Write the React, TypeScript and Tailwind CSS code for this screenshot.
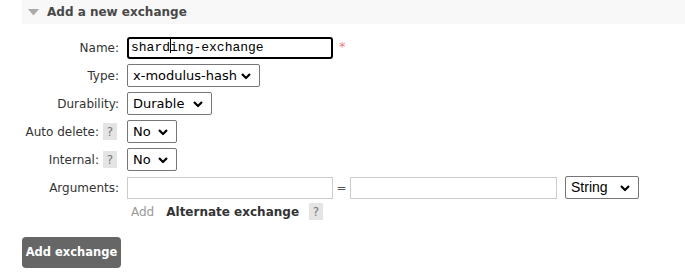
import React from 'react';

const Chevron: React.FC = () => (
    <svg width="10" height="7" viewBox="0 0 10 7" className="absolute right-[8px] top-1/2 -translate-y-1/2 pointer-events-none">
        <path d="M1 1.5 L5 5.5 L9 1.5" fill="none" stroke="#000" strokeWidth="2.2" />
    </svg>
);

const Select: React.FC<{ value: string; width: string; arial?: boolean }> = ({ value, width, arial }) => (
    <div className={`relative h-[23px] ${width} border border-[#767676] rounded-[2px] bg-white flex items-center pl-[5px] text-[13px] text-black ${arial ? "font-['Liberation_Sans',sans-serif] text-[14px]" : ''}`}>
        {value}
        <Chevron />
    </div>
);

const Help: React.FC = () => (
    <span className="inline-flex items-center justify-center w-[14px] h-[17px] bg-[#e4e4e4] text-[#777] text-[12px] ml-[4px]">?</span>
);

const App: React.FC = () => {
    return (
        <div className="w-[685px] h-[277px] bg-white font-['DejaVu_Sans',Verdana,sans-serif] text-[12px] text-[#333] overflow-hidden">
            {/* Section header */}
            <div className="ml-[22px] h-[24px] bg-[#f8f8f8] flex items-center">
                <svg width="11" height="7" viewBox="0 0 11 7" className="ml-[6px] mr-[8px]">
                    <path d="M0 0 H11 L5.5 6.5 Z" fill="#aaa" />
                </svg>
                <span className="font-bold text-[12px] text-[#484848]">Add a new exchange</span>
            </div>

            <div className="grid grid-cols-[127px_1fr] mt-[13px] gap-y-[5px] items-center">
                <div className="text-right pr-[8px]">Name:</div>
                <div className="flex items-center">
                    <div className="relative w-[206px] h-[22px] border-2 border-black rounded-[3px] flex items-center pl-[2px] font-['Liberation_Mono',monospace] text-[13px] text-black">
                        shar<span className="relative">d<span className="absolute right-[-1px] top-[-1px] w-px h-[16px] bg-black"></span></span>ing-exchange
                    </div>
                    <span className="ml-[6px] text-[#f08080] text-[13px] -mt-[3px]">*</span>
                </div>

                <div className="text-right pr-[8px]">Type:</div>
                <Select value="x-modulus-hash" width="w-[133px]" />

                <div className="text-right pr-[8px]">Durability:</div>
                <Select value="Durable" width="w-[85px]" />

                <div className="text-right pr-[10px] flex items-center justify-end">Auto delete:<Help /></div>
                <Select value="No" width="w-[50px]" />

                <div className="text-right pr-[10px] flex items-center justify-end">Internal:<Help /></div>
                <Select value="No" width="w-[50px]" />

                <div className="text-right pr-[8px]">Arguments:</div>
                <div className="flex items-center">
                    <div className="w-[206px] h-[22px] border border-[#ccc] bg-white"></div>
                    <span className="w-[17px] text-center text-[#555]">=</span>
                    <div className="w-[207px] h-[22px] border border-[#ccc] bg-white"></div>
                    <div className="ml-[8px]"><Select value="String" width="w-[74px]" arial /></div>
                </div>

                <div></div>
                <div className="flex items-center h-[19px] -mt-[2px]">
                    <span className="ml-[4px] text-[#999]">Add</span>
                    <span className="ml-[12px] font-bold text-[12px] text-[#333]">Alternate exchange</span>
                    <span className="ml-[6px]"><Help /></span>
                </div>
            </div>

            <button className="ml-[22px] mt-[16px] w-[99px] h-[31px] rounded-[4px] bg-[#666] text-white font-bold text-[11.5px]">
                Add exchange
            </button>
        </div>
    );
};

export default App;
